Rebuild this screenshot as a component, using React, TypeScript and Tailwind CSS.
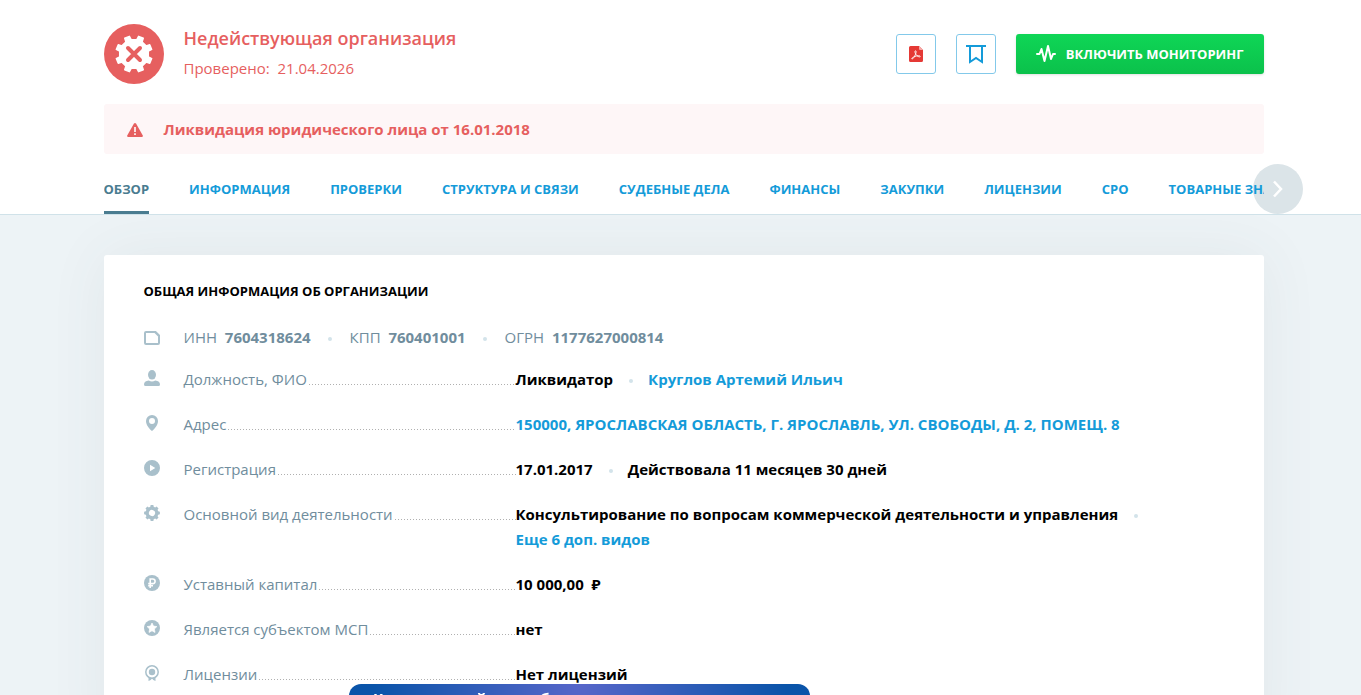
import React, { useState } from "react";

const TABS = [
  "Обзор",
  "Информация",
  "Проверки",
  "Структура и связи",
  "Судебные дела",
  "Финансы",
  "Закупки",
  "Лицензии",
  "СРО",
  "Товарные знаки",
];

function gearPath(teeth: number, c: number, outer: number, inner: number, tip: number, base: number) {
  const step = (Math.PI * 2) / teeth;
  const points: string[] = [];
  for (let i = 0; i < teeth; i++) {
    const a = i * step + step / 2;
    [
      [inner, -base],
      [outer, -tip],
      [outer, tip],
      [inner, base],
    ].forEach(([r, d]) => {
      points.push(`${(c + r * Math.cos(a + d)).toFixed(2)} ${(c + r * Math.sin(a + d)).toFixed(2)}`);
    });
  }
  return `M${points.join("L")}Z`;
}

function StatusIcon() {
  return (
    <svg viewBox="0 0 60 60" className="size-[60px] shrink-0" aria-hidden="true">
      <circle cx="30" cy="30" r="30" fill="#e65f5f" />
      <path d={gearPath(8, 30, 18.3, 14.6, 0.14, 0.2)} fill="#fff" stroke="#fff" strokeWidth="1.4" strokeLinejoin="round" />
      <path d="M24 24l12 12M36 24L24 36" stroke="#e65f5f" strokeWidth="4" strokeLinecap="round" />
    </svg>
  );
}

function RowIcon({ children }: { children: React.ReactNode }) {
  return (
    <svg viewBox="0 0 16 16" className="size-4 shrink-0" fill="#a9c0cb" aria-hidden="true">
      {children}
    </svg>
  );
}

const icons = {
  card: (
    <path d="M2 2h9.500L15 5.500V13a1 1 0 0 1-1 1H2a1 1 0 0 1-1-1V3a1 1 0 0 1 1-1zM11 2l4 4" fill="none" stroke="#a9c0cb" strokeWidth="2" />
  ),
  person: (
    <>
      <ellipse cx="8" cy="4.8" rx="4" ry="4.8" />
      <path d="M0 14.5C0 12 1.5 11 4.8 10.4Q8 12.4 11.2 10.4C14.5 11 16 12 16 14.5q0 1.500-1.500 1.500h-13Q0 16 0 14.500z" />
    </>
  ),
  pin: (
    <path fillRule="evenodd" d="M8 0a6 6 0 0 1 6 6c0 4-3.500 8-6 10C5.500 14 2 10 2 6a6 6 0 0 1 6-6zm0 3a3 3 0 1 0 0 6 3 3 0 0 0 0-6z" />
  ),
  play: <path fillRule="evenodd" d="M8 0a8 8 0 1 1 0 16A8 8 0 0 1 8 0zM6 4.700v6.600L11.300 8z" />,
  gear: (
    <path
      fillRule="evenodd"
      d={gearPath(8, 8, 8, 6.4, 0.17, 0.27) + "M8 4.900a3.100 3.100 0 1 0 0 6.200 3.100 3.100 0 0 0 0-6.200z"}
      transform="rotate(22.5 8 8)"
    />
  ),
  ruble: (
    <>
      <circle cx="8" cy="8" r="8" />
      <path d="M6.200 13V4h2.600a2.300 2.300 0 0 1 0 4.600H4.200M4.200 10.800H9" fill="none" stroke="#fff" strokeWidth="1.600" />
    </>
  ),
  star: (
    <>
      <circle cx="8" cy="8" r="8" />
      <path d="M8 3l1.500 3.100 3.400.5-2.500 2.400.6 3.400-3-1.600-3 1.600.6-3.400-2.500-2.400 3.400-.5z" fill="#fff" stroke="#fff" strokeWidth=".7" strokeLinejoin="round" />
    </>
  ),
  award: (
    <>
      <circle cx="8" cy="7" r="6.200" fill="none" stroke="#a9c0cb" strokeWidth="1.500" />
      <circle cx="8" cy="7" r="3.200" />
      <path d="M4.500 12v4l2.200-1 1.300-1.500L9.300 15l2.200 1v-4L8 13z" />
    </>
  ),
};

function Dot({ wide = false }: { wide?: boolean }) {
  return (
    <span
      className={`inline-block size-1 rounded-full bg-[#d3e3ea] align-middle ${wide ? "mr-[18px] ml-[17px]" : "mr-[15px] ml-4"}`}
    />
  );
}

function Row({ icon, label, children }: { icon: React.ReactNode; label: string; children: React.ReactNode }) {
  return (
    <div className="mb-5 flex">
      <div className="mr-6 pt-[3px]">
        <RowIcon>{icon}</RowIcon>
      </div>
      <dt className="flex h-[25px] w-[332px] shrink-0 items-baseline text-[#708d9d]">
        <span>{label}</span>
        <span className="ml-[2px] h-px grow bg-[linear-gradient(to_right,#b0b0b0_1px,transparent_1px)] bg-size-[3px_1px]" />
      </dt>
      <dd className="min-w-0 font-bold text-black">{children}</dd>
    </div>
  );
}

export default function App() {
  const [active, setActive] = useState(0);
  return (
    <div className="h-screen overflow-hidden bg-[#edf3f6] font-['Open_Sans','Noto_Sans',sans-serif] text-[15px] leading-[25px]">
      <header className="border-b border-[#d0e2e9] bg-white pl-[6px]">
        <div className="mx-auto max-w-[1160px]">
          <div className="flex items-start pt-6">
            <StatusIcon />
            <div className="ml-5 grow text-[#e65f5f]">
              <h1 className="text-lg leading-7 font-semibold">Недействующая организация</h1>
              <p className="mt-1 whitespace-pre">Проверено:  21.04.2026</p>
            </div>
            <div className="flex gap-5 pt-[10px]">
              <button aria-label="Скачать PDF" className="flex size-10 items-center justify-center rounded-[3px] border border-[#83c9ea]">
                <svg viewBox="0 0 14 16" className="h-4 w-[14px]" aria-hidden="true">
                  <path d="M1.500 0H10l4 4v10.500a1.500 1.500 0 0 1-1.500 1.500h-11A1.500 1.500 0 0 1 0 14.500v-13A1.500 1.500 0 0 1 1.500 0z" fill="#e53935" />
                  <path d="M10 0l4 4h-3a1 1 0 0 1-1-1z" fill="#f6a9a7" />
                  <path d="M6.300 4.800c1.300-.4.800 2.300-.1 4.200-.9 2-2.200 4-3.200 4.100-1-.4.800-2 3-2.700s5-1 5.300 0c-.2 1.100-2.600.2-3.900-1.300S5.500 5.400 6.300 4.800z" fill="none" stroke="#fff" strokeWidth=".9" />
                </svg>
              </button>
              <button aria-label="Добавить в закладки" className="flex size-10 items-center justify-center rounded-[3px] border border-[#83c9ea]">
                <svg viewBox="0 0 20 20" className="size-5" fill="none" stroke="#149bd9" strokeWidth="2" aria-hidden="true">
                  <path d="M0 2h20M4 2v16l6-4 6 4V2" />
                </svg>
              </button>
              <button className="flex h-10 items-center gap-[10px] rounded-[3px] bg-linear-to-b from-[#0fd656] to-[#0bc14b] px-5 text-[13px] font-bold text-white uppercase shadow-sm">
                <svg viewBox="0 0 20 20" className="size-5" fill="none" stroke="#fff" strokeWidth="2" strokeLinejoin="round" strokeLinecap="round" aria-hidden="true">
                  <path d="M1 10h2.500l2-5 3 12L12 2l3 13 2-5h2" />
                </svg>
                Включить мониторинг
              </button>
            </div>
          </div>
          <div className="mt-5 flex h-[50px] items-center rounded-[3px] bg-[#fef6f7] pl-[23px] font-bold text-[#e65f5f]">
            <svg viewBox="0 0 16 14" className="mt-[2px] mr-[21px] h-[14px] w-4" aria-hidden="true">
              <path d="M7 .6q1-1.200 2 0l6.800 11.900q.4 1.500-1 1.500H1.200q-1.400 0-1-1.500z" fill="#e65f5f" />
              <path d="M7.200 4h1.600v5H7.200zM7.200 10.300h1.600v1.600H7.200z" fill="#fff" />
            </svg>
            Ликвидация юридического лица от 16.01.2018
          </div>
          <div className="relative">
            <button aria-label="Следующие разделы" className="absolute top-[10px] -right-[39px] flex size-[50px] items-center justify-center rounded-full bg-[#dbe4e8]">
              <svg viewBox="0 0 10 18" className="h-[18px] w-[10px]" fill="none" stroke="#fff" strokeWidth="2.5" aria-hidden="true">
                <path d="M1 1.500l7 7.500-7 7.500" />
              </svg>
            </button>
            <nav className="relative flex h-[60px] gap-10 overflow-hidden pt-[10px] text-[13px] font-bold whitespace-nowrap uppercase">
              {TABS.map((tab, i) => (
                <a
                  key={tab}
                  href="#"
                  onClick={(e) => {
                    e.preventDefault();
                    setActive(i);
                  }}
                  className={
                    i === active
                      ? "h-[50px] border-b-3 border-[#4a7c90] pt-[13px] text-[#4a7c90]"
                      : "h-[50px] pt-[13px] text-[#149bd9]"
                  }
                >
                  {tab}
                </a>
              ))}
            </nav>
          </div>
        </div>
      </header>
      <main className="overflow-hidden pt-10 pl-[6px]">
        <section className="mx-auto max-w-[1160px] rounded-[3px] bg-white px-10 pt-6 pb-10 shadow-[0_0_60px_rgba(70,80,90,0.07)]">
          <h2 className="text-[13px] font-bold text-black uppercase">Общая информация об организации</h2>
          <div className="mt-[21px] flex items-center text-[#708d9d]">
            <RowIcon>{icons.card}</RowIcon>
            <p className="ml-6 whitespace-pre">
              ИНН  <b>7604318624</b>
              <Dot wide />
              КПП  <b>760401001</b>
              <Dot wide />
              ОГРН  <b>1177627000814</b>
            </p>
          </div>
          <dl className="mt-[17px]">
            <Row icon={icons.person} label="Должность, ФИО">
              Ликвидатор
              <Dot />
              <a href="#" className="text-[#149bd9]">Круглов Артемий Ильич</a>
            </Row>
            <Row icon={icons.pin} label="Адрес">
              <a href="#" className="text-[#149bd9]">150000, ЯРОСЛАВСКАЯ ОБЛАСТЬ, Г. ЯРОСЛАВЛЬ, УЛ. СВОБОДЫ, Д. 2, ПОМЕЩ. 8</a>
            </Row>
            <Row icon={icons.play} label="Регистрация">
              17.01.2017
              <Dot />
              Действовала 11 месяцев 30 дней
            </Row>
            <Row icon={icons.gear} label="Основной вид деятельности">
              Консультирование по вопросам коммерческой деятельности и управления
              <Dot />
              <br />
              <a href="#" className="text-[#149bd9]">Еще 6 доп. видов</a>
            </Row>
            <Row icon={icons.ruble} label="Уставный капитал">
              <span className="whitespace-pre">10 000,00  ₽</span>
            </Row>
            <Row icon={icons.star} label="Является субъектом МСП">нет</Row>
            <Row icon={icons.award} label="Лицензии">Нет лицензий</Row>
          </dl>
        </section>
      </main>
      <aside className="fixed top-[684px] left-[349px] h-20 w-[461px] rounded-xl bg-[radial-gradient(circle_at_50%_0%,#5766c9_0%,#0a54a9_85%)] px-6 pt-[2px] font-bold text-white">
        Консультаций не требуется
      </aside>
    </div>
  );
}
